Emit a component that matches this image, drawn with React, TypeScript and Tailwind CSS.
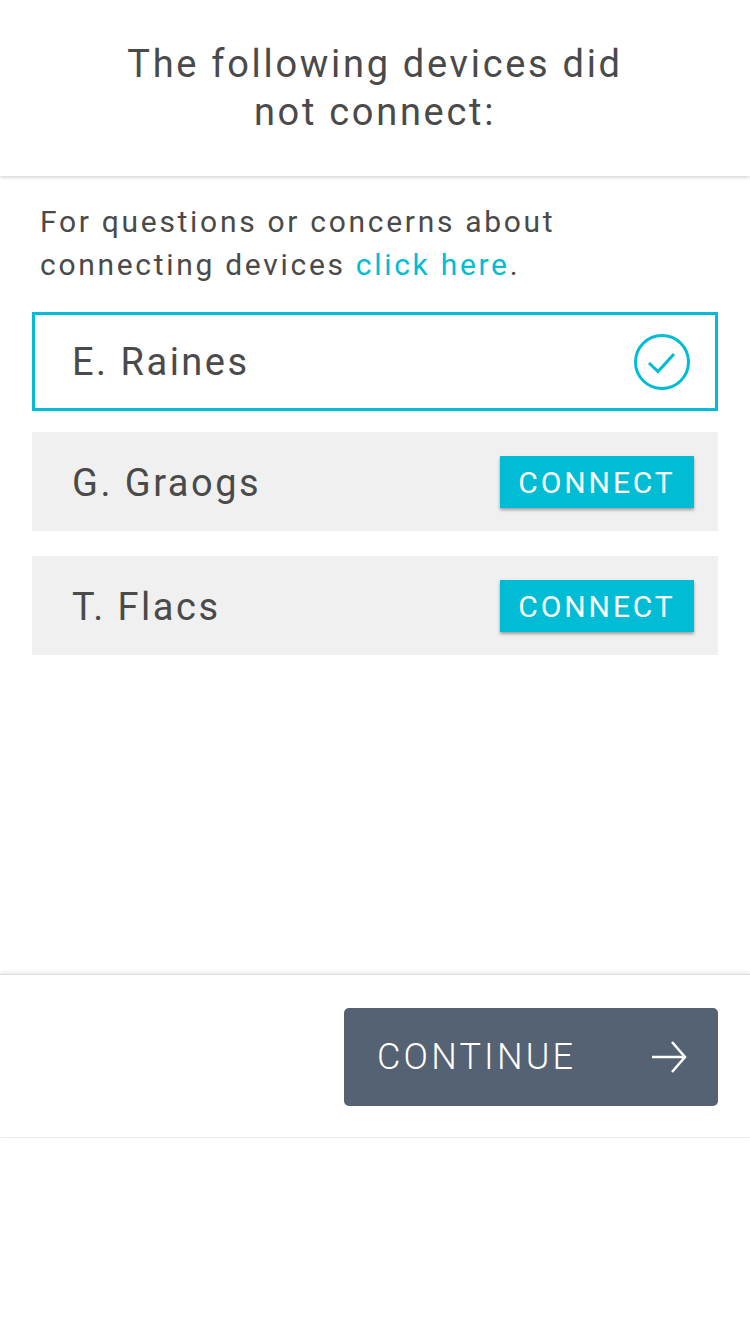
import React from 'react';

const devices = [
  { id: 1, name: 'E. Raines', connected: true },
  { id: 2, name: 'G. Graogs', connected: false },
  { id: 3, name: 'T. Flacs', connected: false },
];

const CheckCircle: React.FC = () => (
  <svg width="58" height="58" viewBox="0 0 58 58" fill="none">
    <circle cx="29" cy="29" r="26.5" stroke="#00bcd4" strokeWidth="3" />
    <path d="M16 30 L25 38.5 L41 21" stroke="#00bcd4" strokeWidth="3" />
  </svg>
);

const ArrowRight: React.FC = () => (
  <svg width="38" height="34" viewBox="0 0 38 34" fill="none">
    <path d="M2 17 H35 M22 2 L35 17 L22 32" stroke="#ffffff" strokeWidth="2.5" />
  </svg>
);

const DeviceRow: React.FC<{ name: string; connected: boolean; className?: string }> = ({ name, connected, className }) => {
  if (connected) {
    return (
      <div className={`flex items-center justify-between h-[99px] border-[3px] border-[#00bcd4] bg-white pl-[37px] pr-[24px] ${className ?? ''}`}>
        <span className="text-[38px] tracking-[2.5px] text-[#4a4a4a] pt-[2px]">{name}</span>
        <CheckCircle />
      </div>
    );
  }
  return (
    <div className={`flex items-center justify-between h-[99px] bg-[#f0f0f0] pl-[40px] pr-[24px] ${className ?? ''}`}>
      <span className="text-[38px] tracking-[2.5px] text-[#4a4a4a] pt-[3px]">{name}</span>
      <button className="w-[194px] h-[52px] bg-[#00bcd4] text-white text-[30px] tracking-[2.9px] pt-[2px] shadow-[0_2px_3px_rgba(0,0,0,0.35)]">
        CONNECT
      </button>
    </div>
  );
};

const App: React.FC = () => {
  return (
    <div className="w-[750px] h-[1334px] bg-white flex flex-col font-['Roboto',sans-serif] text-[#4a4a4a]">
      <header className="h-[176px] shrink-0 pt-[40px] bg-white shadow-[0_2px_3px_rgba(0,0,0,0.14)] relative z-10">
        <h1 className="text-center text-[38px] leading-[48px] tracking-[2.7px] text-[#4a4a4a]">
          The following devices did
          <br />
          not connect:
        </h1>
      </header>

      <main className="h-[798px] shrink-0 px-[32px] pt-[24px]">
        <p className="px-[8px] text-[30px] leading-[43px] tracking-[2.7px]">
          For questions or concerns about
          <br />
          connecting devices <span className="text-[#00bcd4]">click here</span>.
        </p>
        <div className="mt-[26px] flex flex-col">
          {devices.map((d, i) => (
            <DeviceRow
              key={d.id}
              name={d.name}
              connected={d.connected}
              className={i === 1 ? 'mt-[21px]' : i === 2 ? 'mt-[25px]' : ''}
            />
          ))}
        </div>
      </main>

      <footer className="h-[164px] shrink-0 border-t border-[#dddddd] border-b border-b-[#eeeeee] shadow-[0_-2px_3px_rgba(0,0,0,0.08)] flex justify-end items-start pt-[33px] pr-[32px]">
        <button className="w-[374px] h-[98px] rounded-[5px] bg-[#546273] flex items-center justify-between pl-[33px] pr-[30px]">
          <span className="text-[36px] font-light tracking-[3.2px] text-white">CONTINUE</span>
          <ArrowRight />
        </button>
      </footer>
    </div>
  );
};

export default App;
